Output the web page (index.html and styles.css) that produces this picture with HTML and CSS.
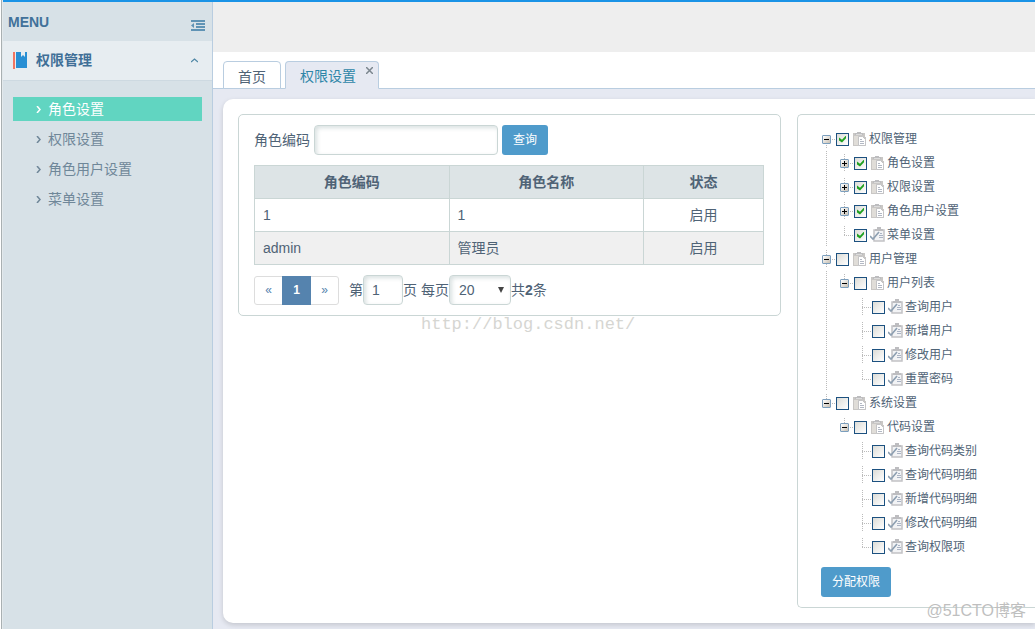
FILE: index.html
```html
<!DOCTYPE html>
<html lang="zh-CN">
<head>
<meta charset="utf-8">
<title>权限管理</title>
<link rel="stylesheet" href="styles.css">
</head>
<body>
<svg class="sprite" aria-hidden="true">
  <symbol id="clip" viewBox="0 0 16 16">
    <path fill="#c9c7c5" d="M1 2h12v4h1v9H1z"/>
    <path fill="#e0ddd8" d="M2 5h4v9H2z"/>
    <path fill="#bdbdbf" d="M3 2h2V1h4v1h2v2H3z"/>
    <path fill="#dcdcdc" d="M4 3h6v1H4z"/>
    <path fill="#fff" stroke="#c4c4c6" d="M6.500 5.500h4l3 3v6h-7z"/>
    <path fill="none" stroke="#b2b8c4" d="M8 8.500h2M8 10.500h4M8 12.500h4"/>
  </symbol>
  <symbol id="task" viewBox="0 0 16 16">
    <path fill="#f2f3f5" stroke="#c2c2c5" stroke-width="1.500" d="M4 3h10v11H4z"/>
    <path fill="#bdbdc0" d="M5 2h2V0h4v2h2v2H5z"/>
    <path fill="none" stroke="#a9b3c4" d="M10 6.500h2M9 8.500h4M9 10.500h4"/>
    <path fill="none" stroke="#8d9fb1" stroke-width="1.600" d="M0 9l3 3 6-7"/>
  </symbol>
</svg>
<div class="app">
  <aside class="sidebar">
    <header class="menu-head">
      <strong>MENU</strong>
      <button class="fold" type="button" aria-label="收起菜单">
        <svg width="14" height="11" viewBox="0 0 14 11"><path fill="#5f93b5" d="M0 0h14v2H0zM5 3h9v2H5zM5 6h9v2H5zM0 9h14v2H0zM3 3v5L0 5.500z"/></svg>
      </button>
    </header>
    <button class="section" type="button">
      <svg width="14" height="17" viewBox="0 0 14 17"><path fill="#f27562" d="M0 0h2v17H0z"/><path fill="#288fd4" d="M3 0h5v5l2-2 2 2V0h2v16H3z"/></svg>
      <span>权限管理</span>
      <svg class="caret" width="7" height="5" viewBox="0 0 7 5"><path fill="none" stroke="#4f87a6" stroke-width="1.300" d="M0 4l3.500-3L7 4"/></svg>
    </button>
    <nav class="menu">
      <a class="on" href="#"><svg width="5" height="7" viewBox="0 0 5 7"><path d="M1 0l3 3.500L1 7"/></svg>角色设置</a>
      <a href="#"><svg width="5" height="7" viewBox="0 0 5 7"><path d="M1 0l3 3.500L1 7"/></svg>权限设置</a>
      <a href="#"><svg width="5" height="7" viewBox="0 0 5 7"><path d="M1 0l3 3.500L1 7"/></svg>角色用户设置</a>
      <a href="#"><svg width="5" height="7" viewBox="0 0 5 7"><path d="M1 0l3 3.500L1 7"/></svg>菜单设置</a>
    </nav>
  </aside>
  <main class="main">
    <div class="banner"></div>
    <div class="tabs">
      <button class="tab" type="button">首页</button>
      <div class="tab current"><a href="#">权限设置</a><button class="close" type="button" aria-label="关闭"><svg width="7" height="7" viewBox="0 0 7 7"><path fill="none" stroke="#7b868e" stroke-width="1.500" d="M0 0l7 7M7 0L0 7"/></svg></button></div>
    </div>
    <div class="content">
      <div class="card">
        <section class="panel roles">
          <form class="search">
            <label for="code">角色编码</label>
            <input id="code" class="field" type="text">
            <button class="btn" type="button">查询</button>
          </form>
          <table class="grid">
            <thead><tr><th>角色编码</th><th>角色名称</th><th class="state">状态</th></tr></thead>
            <tbody>
              <tr><td>1</td><td>1</td><td class="state">启用</td></tr>
              <tr><td>admin</td><td>管理员</td><td class="state">启用</td></tr>
            </tbody>
          </table>
          <div class="paging">
            <div class="pages"><a href="#">«</a><a class="now" href="#">1</a><a href="#">»</a></div>
            <label for="page">第</label><input id="page" class="field page" type="text" value="1"><span>页&nbsp;</span><label for="size">每页</label><span class="pick"><select id="size" class="field"><option>20</option></select></span><span>共<b>2</b>条</span>
          </div>
        </section>
        <section class="panel rights">
          <ul class="tree">
            <li>
              <div class="row"><button class="sw first minus" type="button" aria-label="折叠"></button><label><input type="checkbox" checked><svg class="ico"><use href="#clip"/></svg>权限管理</label></div>
              <ul class="line">
                <li><div class="row"><button class="sw mid plus" type="button" aria-label="展开"></button><label><input type="checkbox" checked><svg class="ico"><use href="#clip"/></svg>角色设置</label></div></li>
                <li><div class="row"><button class="sw mid plus" type="button" aria-label="展开"></button><label><input type="checkbox" checked><svg class="ico"><use href="#clip"/></svg>权限设置</label></div></li>
                <li><div class="row"><button class="sw mid plus" type="button" aria-label="展开"></button><label><input type="checkbox" checked><svg class="ico"><use href="#clip"/></svg>角色用户设置</label></div></li>
                <li><div class="row"><span class="sw last"></span><label><input type="checkbox" checked><svg class="ico"><use href="#task"/></svg>菜单设置</label></div></li>
              </ul>
            </li>
            <li>
              <div class="row"><button class="sw mid minus" type="button" aria-label="折叠"></button><label><input type="checkbox"><svg class="ico"><use href="#clip"/></svg>用户管理</label></div>
              <ul class="line">
                <li>
                  <div class="row"><button class="sw last minus" type="button" aria-label="折叠"></button><label><input type="checkbox"><svg class="ico"><use href="#clip"/></svg>用户列表</label></div>
                  <ul>
                    <li><div class="row"><span class="sw mid"></span><label><input type="checkbox"><svg class="ico"><use href="#task"/></svg>查询用户</label></div></li>
                    <li><div class="row"><span class="sw mid"></span><label><input type="checkbox"><svg class="ico"><use href="#task"/></svg>新增用户</label></div></li>
                    <li><div class="row"><span class="sw mid"></span><label><input type="checkbox"><svg class="ico"><use href="#task"/></svg>修改用户</label></div></li>
                    <li><div class="row"><span class="sw last"></span><label><input type="checkbox"><svg class="ico"><use href="#task"/></svg>重置密码</label></div></li>
                  </ul>
                </li>
              </ul>
            </li>
            <li>
              <div class="row"><button class="sw last minus" type="button" aria-label="折叠"></button><label><input type="checkbox"><svg class="ico"><use href="#clip"/></svg>系统设置</label></div>
              <ul>
                <li>
                  <div class="row"><button class="sw last minus" type="button" aria-label="折叠"></button><label><input type="checkbox"><svg class="ico"><use href="#clip"/></svg>代码设置</label></div>
                  <ul>
                    <li><div class="row"><span class="sw mid"></span><label><input type="checkbox"><svg class="ico"><use href="#task"/></svg>查询代码类别</label></div></li>
                    <li><div class="row"><span class="sw mid"></span><label><input type="checkbox"><svg class="ico"><use href="#task"/></svg>查询代码明细</label></div></li>
                    <li><div class="row"><span class="sw mid"></span><label><input type="checkbox"><svg class="ico"><use href="#task"/></svg>新增代码明细</label></div></li>
                    <li><div class="row"><span class="sw mid"></span><label><input type="checkbox"><svg class="ico"><use href="#task"/></svg>修改代码明细</label></div></li>
                    <li><div class="row"><span class="sw last"></span><label><input type="checkbox"><svg class="ico"><use href="#task"/></svg>查询权限项</label></div></li>
                  </ul>
                </li>
              </ul>
            </li>
          </ul>
          <button class="btn assign" type="button">分配权限</button>
        </section>
      </div>
    </div>
  </main>
  <div class="mark blog">http://blog.csdn.net/</div>
  <div class="mark site">@51CTO博客</div>
</div>
</body>
</html>
```

FILE: styles.css
```css
*, *::before, *::after { box-sizing: border-box; }

body {
  margin: 0;
  font: 14px/20px "Liberation Sans", "Noto Sans CJK SC", sans-serif;
  color: #4f6376;
  background: #fff;
}

button, input, select { font: inherit; color: inherit; margin: 0; }
button { border: 0; padding: 0; background: none; }
a { color: inherit; text-decoration: none; }
ul { list-style: none; margin: 0; padding: 0; }
.sprite { position: absolute; width: 0; height: 0; }

.app {
  position: relative;
  display: grid;
  grid-template-columns: 210px minmax(0, 1fr);
  min-height: 100vh;
  margin-left: 1px;
  padding-left: 1px;
  border-left: 1px solid #a9b0b2;
  background: linear-gradient(#1a93e6, #1a93e6) 1px 0 / 100% 2px no-repeat #e3e9ec;
  padding-top: 2px;
}

/* Sidebar */
.sidebar { background: #d7e1e7; border-right: 1px solid #b9cde0; }
.menu-head {
  display: flex;
  align-items: center;
  justify-content: space-between;
  height: 39px;
  padding: 0 7px 0 5px;
  color: #41719a;
}
.menu-head strong { font-size: 14px; }
.fold { padding-top: 8px; line-height: 0; }
.section {
  display: flex;
  align-items: center;
  width: 100%;
  height: 40px;
  padding: 0 14px 1px 10px;
  background: #e7edf1;
  border-bottom: 1px solid #cdd9e1;
  color: #3f6f97;
  font-weight: bold;
  gap: 9px;
}
.caret { margin-left: auto; }
.menu { display: grid; gap: 6px; padding: 16px 10px; }
.menu a {
  display: flex;
  align-items: center;
  gap: 7px;
  height: 24px;
  padding-left: 23px;
  color: #6f8799;
}
.menu a.on { background: #61d5c1; color: #fff; }
.menu path { fill: none; stroke: currentColor; stroke-width: 1.5; }

/* Main area */
.main { display: flex; flex-direction: column; background: #e6e9f2; }
.banner { height: 50px; background: #eee; }
.tabs {
  display: flex;
  align-items: flex-end;
  gap: 4px;
  height: 37px;
  padding-left: 10px;
  background: linear-gradient(#b9cde0, #b9cde0) 0 100% / 100% 1px no-repeat #fff;
}
.tab {
  position: relative;
  height: 28px;
  padding: 4px 14px 0;
  border: 1px solid #b9cde0;
  border-radius: 4px 4px 0 0;
  background: #fff;
}
.tab.current { padding-right: 22px; background: #e6e9f2; border-bottom-color: #e6e9f2; color: #2e86a8; }
.close { position: absolute; top: 5px; right: 5px; line-height: 0; }

.content { flex: 1; display: flex; padding: 10px 0 6px 10px; }
.card {
  flex: 1;
  display: grid;
  grid-template-columns: minmax(0, 543fr) minmax(0, 238fr);
  align-items: start;
  gap: 16px;
  padding: 15px 0 15px 15px;
  background: #fff;
  border-radius: 10px 0 0 10px;
  box-shadow: 0 2px 5px rgba(0, 0, 0, .15);
}
.panel { border: 1px solid #cad6d5; border-radius: 5px; }
.roles { display: grid; gap: 10px; padding: 10px 16px 10px 15px; }

.search { display: flex; align-items: center; gap: 4px; }
.field {
  width: 184px;
  height: 30px;
  padding: 0 8px;
  border: 1px solid #cad6d5;
  border-radius: 4px;
  background: #fff;
  box-shadow: inset 2px 2px 4px rgba(160, 180, 180, .4);
}
.btn {
  height: 30px;
  padding: 0 11px;
  border-radius: 3px;
  background: #4f9bcb;
  color: #fff;
  font-size: 12px;
}

.grid { width: 100%; border-collapse: collapse; table-layout: fixed; }
.grid th, .grid td { height: 33px; padding: 0 8px; border: 1px solid #cad6d5; text-align: left; }
.grid th { background: #dde4e6; text-align: center; }
.grid .state { width: 120px; text-align: center; }
.grid tbody tr:nth-child(2) { background: #f0f0f0; }

.paging { display: flex; align-items: center; white-space: nowrap; }
.pages {
  display: flex;
  height: 29px;
  margin-right: 10px;
  border: 1px solid #ddd;
  border-radius: 3px;
  font-size: 12px;
  line-height: 27px;
  text-align: center;
}
.pages a { width: 27px; color: #5483ad; }
.pages .now { width: 29px; margin: -1px 0; line-height: 29px; background: #5583ae; color: #fff; font-weight: bold; }
.page { width: 40px; }
.pick { position: relative; }
.pick select { display: block; width: 62px; appearance: none; padding-left: 9px; }
.pick::after {
  content: "";
  position: absolute;
  right: 7px;
  top: 12px;
  border: 3px solid transparent;
  border-top: 6px solid #444;
  border-bottom: 0;
}

/* Rights tree */
.rights { padding: 12px 0 10px 19px; border-right: 0; border-radius: 5px 0 0 5px; }
.tree { font-size: 12px; }
.tree ul { padding-left: 18px; }
.tree, .sw {
  --v: repeating-linear-gradient(#bbb 0 1px, transparent 1px 2px);
  --h: repeating-linear-gradient(90deg, #bbb 0 1px, transparent 1px 2px);
}
.tree .line { background: var(--v) 9px 0 / 1px 100% no-repeat; }
.row, .row label { display: flex; align-items: center; }
.row { height: 24px; white-space: nowrap; }
.sw { position: relative; width: 18px; height: 18px; }
.sw.mid { background: var(--v) 9px 0 / 1px 18px no-repeat, var(--h) 9px 9px / 9px 1px no-repeat; }
.sw.first { background: var(--v) 9px 9px / 1px 9px no-repeat, var(--h) 9px 9px / 9px 1px no-repeat; }
.sw.last { background: var(--v) 9px 0 / 1px 9px no-repeat, var(--h) 9px 9px / 9px 1px no-repeat; }
.minus::before, .plus::before {
  content: "";
  position: absolute;
  left: 5px;
  top: 5px;
  width: 9px;
  height: 9px;
  border: 1px solid #7b9ebd;
  border-radius: 1px;
}
.minus::before { background: linear-gradient(#000, #000) center / 5px 1px no-repeat, linear-gradient(135deg, #fff, #c8c0b4); }
.plus::before {
  background: linear-gradient(#000, #000) center / 5px 1px no-repeat, linear-gradient(#000, #000) center / 1px 5px no-repeat, linear-gradient(135deg, #fff, #c8c0b4);
}
.row input {
  appearance: none;
  width: 13px;
  height: 13px;
  margin: 0 3px 0 1px;
  border: 1px solid #1c5180;
  background: linear-gradient(135deg, #dcdcd7, #fff);
}
.row input:checked::after {
  content: "";
  display: block;
  width: 7px;
  height: 7px;
  margin: 2px;
  background: #21a121;
  clip-path: polygon(0 28%, 43% 62%, 100% 0, 100% 40%, 43% 100%, 0 70%);
}
.ico { width: 16px; height: 16px; margin-right: 1px; }
.assign { display: block; margin: 8px 0 0 4px; }

/* Overlaid marks */
.mark { position: absolute; pointer-events: none; white-space: nowrap; }
.blog { left: 419px; top: 315px; font: 17px/20px "Liberation Mono", monospace; color: #d6d6d2; }
.site { right: 9px; bottom: 8px; font-size: 16px; color: #bfbfbf; }
```
